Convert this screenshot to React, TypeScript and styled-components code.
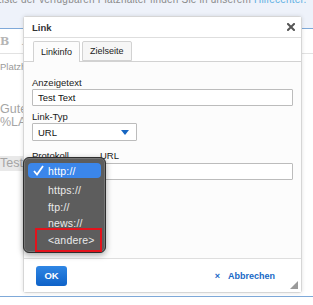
import styled, { createGlobalStyle } from 'styled-components';

const GlobalStyle = createGlobalStyle`
  html, body {
    margin: 0;
    padding: 0;
    background: #ffffff;
  }
  * {
    box-sizing: border-box;
  }
`;

const Page = styled.div`
  position: relative;
  width: 313px;
  height: 305px;
  overflow: hidden;
  background: #ffffff;
  font-family: 'Liberation Sans', Arial, sans-serif;
`;

const TopBand = styled.div`
  height: 29px;
  background: #eef2fa;
  border-bottom: 1px solid #7fa9d9;
  overflow: hidden;
`;

const HintText = styled.div`
  margin: -6px 0 0 -4px;
  font-size: 10px;
  line-height: 12px;
  letter-spacing: 0.2px;
  color: #8a8a8a;
  white-space: nowrap;
`;

const HintLink = styled.span`
  color: #5fb0e3;
`;

const EditorToolbar = styled.div`
  display: flex;
  gap: 13px;
  align-items: center;
  height: 25px;
  padding-top: 1px;
  border-bottom: 1px solid #e2e2e2;
  font-family: 'DejaVu Serif', serif;
  font-size: 11px;
  color: #b5b5b5;
`;

const ToolIcon = styled.span<{ $italic?: boolean }>`
  font-weight: bold;
  font-style: ${(p) => (p.$italic ? 'italic' : 'normal')};
`;

const Placeholder = styled.div`
  margin-top: 7px;
  font-size: 9.5px;
  line-height: 12px;
  color: #9a9a9a;
`;

const EditorText = styled.div`
  margin-top: 30px;
  font-size: 12.5px;
  line-height: 13px;
  color: #a5a5a5;
`;

const Highlight = styled.span`
  display: inline-block;
  margin-top: 27px;
  padding-right: 2px;
  background: #e9e9e9;
  font-size: 12.5px;
  line-height: 15px;
  color: #a5a5a5;
`;

const BottomLine = styled.div`
  position: absolute;
  left: 0;
  right: 0;
  top: 296px;
  border-top: 1px solid #7fa9d9;
`;

const Dialog = styled.div`
  position: absolute;
  left: 23px;
  top: 16px;
  width: 279px;
  height: 277px;
  display: flex;
  flex-direction: column;
  background: #fcfcfc;
  border: 1px solid #d6d6d6;
  border-radius: 3px;
  box-shadow: 0 0 4px rgba(0, 0, 0, 0.12);
  font-size: 9.5px;
  color: #1a1a1a;
`;

const DialogHeader = styled.div`
  display: flex;
  align-items: center;
  justify-content: space-between;
  height: 21px;
  padding: 0 6px 0 8px;
  background: #ffffff;
  border-bottom: 1px solid #dedede;
`;

const Title = styled.div`
  font-weight: bold;
  font-size: 9.5px;
  color: #333;
`;

const TabBar = styled.div`
  display: flex;
  gap: 2px;
  padding: 3px 0 0 9px;
  background: #ffffff;
  border-bottom: 1px solid #d2d2d2;
`;

const Tab = styled.div<{ $active?: boolean }>`
  height: ${(p) => (p.$active ? '21px' : '20px')};
  margin-bottom: ${(p) => (p.$active ? '-1px' : '0')};
  padding: 0 7px;
  display: flex;
  align-items: center;
  border: 1px solid #d2d2d2;
  border-bottom: ${(p) => (p.$active ? 'none' : '1px solid #d2d2d2')};
  border-radius: 2px 2px 0 0;
  background: ${(p) => (p.$active ? '#fcfcfc' : '#f6f6f6')};
  font-size: 9px;
  color: #222;
`;

const Body = styled.div`
  flex: 1;
  padding: 15px 8px 0 8px;
`;

const Label = styled.div`
  height: 12px;
  line-height: 12px;
  font-size: 9.5px;
  color: #1a1a1a;
`;

const Field = styled.div<{ $gap?: number }>`
  margin-bottom: ${(p) => p.$gap ?? 5}px;
`;

const TextInput = styled.div<{ $width?: string }>`
  width: ${(p) => p.$width ?? '100%'};
  height: 17px;
  padding: 0 5px;
  display: flex;
  align-items: center;
  border: 1px solid #bcbcbc;
  border-radius: 1px;
  background: #ffffff;
  font-size: 9.5px;
  color: #111;
`;

const Select = styled(TextInput)`
  justify-content: space-between;
  height: 18px;
  padding-right: 7px;
`;

const Row = styled.div`
  display: flex;
  gap: 8px;
  margin-top: 9px;
`;

const Column = styled.div<{ $grow?: boolean; $width?: number }>`
  flex: ${(p) => (p.$grow ? 1 : 'none')};
  width: ${(p) => (p.$width ? `${p.$width}px` : 'auto')};
  display: flex;
  flex-direction: column;
  gap: 1px;
`;

const Footer = styled.div`
  position: relative;
  display: flex;
  align-items: center;
  justify-content: space-between;
  height: 34px;
  padding: 0 26px 0 12px;
  border-top: 1px solid #dedede;
  background: #ffffff;
`;

const OkButton = styled.div`
  width: 31px;
  height: 20px;
  display: flex;
  align-items: center;
  justify-content: center;
  border-radius: 3px;
  background: linear-gradient(#2f86e4, #0e62c8);
  color: #ffffff;
  font-weight: bold;
  font-size: 9.5px;
`;

const CancelButton = styled.div`
  display: flex;
  align-items: center;
  gap: 8px;
  color: #1768c6;
  font-weight: bold;
  font-size: 9px;
`;

const CancelX = styled.span`
  font-size: 9px;
`;

const ResizeHandle = styled.svg`
  position: absolute;
  right: 3px;
  bottom: 3px;
`;

const Menu = styled.div`
  position: absolute;
  left: 23px;
  top: 157px;
  width: 83px;
  height: 96px;
  padding: 5px 4px;
  display: flex;
  flex-direction: column;
  background: #5d5d5d;
  border: 1px solid #2e2e2e;
  border-radius: 6px;
  box-shadow: 0 2px 6px rgba(0, 0, 0, 0.35), inset 0 0 0 1px #767676;
  font-size: 10.5px;
  color: #ececec;
`;

const MenuItem = styled.div<{ $selected?: boolean }>`
  position: relative;
  height: ${(p) => (p.$selected ? '15px' : '16.5px')};
  margin-bottom: ${(p) => (p.$selected ? '4px' : '0')};
  flex: none;
  display: flex;
  align-items: center;
  padding-left: 20px;
  border-radius: 4px;
  background: ${(p) => (p.$selected ? '#3b86ea' : 'transparent')};
  color: ${(p) => (p.$selected ? '#ffffff' : '#eaeaea')};
  letter-spacing: 0.2px;
`;

const Check = styled.svg`
  position: absolute;
  left: 5px;
  top: 2px;
`;

const RedMark = styled.div`
  position: absolute;
  left: 11px;
  top: 70px;
  width: 67px;
  height: 24px;
  border: 2px solid #e3131c;
`;

const App = () => {
  const protocols = ['http://', 'https://', 'ftp://', 'news://', '<andere>'];

  return (
    <Page>
      <GlobalStyle />
      <TopBand>
        <HintText>
          Liste der verfügbaren Platzhalter finden Sie in unserem <HintLink>Hilfecenter.</HintLink>
        </HintText>
      </TopBand>
      <EditorToolbar>
        <ToolIcon>B</ToolIcon>
        <ToolIcon $italic>I</ToolIcon>
      </EditorToolbar>
      <Placeholder>Platzhalter</Placeholder>
      <EditorText>
        Guten Tag
        <br />
        %LAST%
      </EditorText>
      <Highlight>Test Text</Highlight>
      <BottomLine />

      <Dialog>
        <DialogHeader>
          <Title>Link</Title>
          <svg width="8" height="8" viewBox="0 0 8 8">
            <path d="M1 1 L7 7 M7 1 L1 7" stroke="#555" strokeWidth="2" strokeLinecap="square" />
          </svg>
        </DialogHeader>
        <TabBar>
          <Tab $active>Linkinfo</Tab>
          <Tab>Zielseite</Tab>
        </TabBar>
        <Body>
          <Field>
            <Label>Anzeigetext</Label>
            <TextInput>Test Text</TextInput>
          </Field>
          <Field $gap={0}>
            <Label>Link-Typ</Label>
            <Select $width="105px">
              URL
              <svg width="8" height="5" viewBox="0 0 8 5">
                <path d="M0 0 L8 0 L4 5 Z" fill="#1665c1" />
              </svg>
            </Select>
          </Field>
          <Row>
            <Column $width={60}>
              <Label>Protokoll</Label>
              <Select>http://</Select>
            </Column>
            <Column $grow>
              <Label>URL</Label>
              <TextInput />
            </Column>
          </Row>
        </Body>
        <Footer>
          <OkButton>OK</OkButton>
          <CancelButton>
            <CancelX>×</CancelX>
            Abbrechen
          </CancelButton>
          <ResizeHandle width="8" height="8" viewBox="0 0 8 8">
            <path d="M8 0 L8 8 L0 8 Z" fill="#9a9a9a" />
          </ResizeHandle>
        </Footer>
      </Dialog>

      <Menu>
        {protocols.map((p, i) => (
          <MenuItem key={p} $selected={i === 0}>
            {i === 0 && (
              <Check width="11" height="11" viewBox="0 0 11 11">
                <path d="M1 6 L4 9.5 L10 1" stroke="#ffffff" strokeWidth="1.8" fill="none" />
              </Check>
            )}
            {p}
          </MenuItem>
        ))}
        <RedMark />
      </Menu>
    </Page>
  );
};

export default App;
